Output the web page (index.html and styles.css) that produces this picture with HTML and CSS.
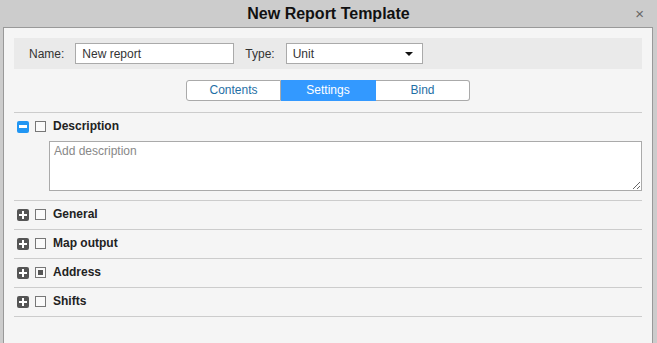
FILE: index.html
```html
<!DOCTYPE html>
<html lang="en">
  <head>
    <meta charset="UTF-8" />
    <meta name="viewport" content="width=device-width, initial-scale=1.0" />
    <title>New Report Template</title>
    <link rel="stylesheet" href="styles.css">
  </head>
  <body>
    <div class="dialog">
      <div class="header">
        <span class="title">New Report Template</span>
        <span class="close">&times;</span>
      </div>

      <div class="panel">
        <div class="props">
          <label class="prop-label">Name:</label>
          <input class="field name-field" type="text" value="New report" />
          <label class="prop-label">Type:</label>
          <div class="field select">
            <span>Unit</span>
            <span class="arrow"></span>
          </div>
        </div>

        <div class="tabs">
          <div class="tab">Contents</div>
          <div class="tab active">Settings</div>
          <div class="tab">Bind</div>
        </div>

        <div class="sections">
          <div class="section">
            <div class="section-head">
              <span class="toggle open"></span>
              <span class="check"></span>
              <span class="section-name">Description</span>
            </div>
            <textarea class="description" placeholder="Add description"></textarea>
          </div>

          <div class="section">
            <div class="section-head">
              <span class="toggle"></span>
              <span class="check"></span>
              <span class="section-name">General</span>
            </div>
          </div>

          <div class="section">
            <div class="section-head">
              <span class="toggle"></span>
              <span class="check"></span>
              <span class="section-name">Map output</span>
            </div>
          </div>

          <div class="section">
            <div class="section-head">
              <span class="toggle"></span>
              <span class="check partial"></span>
              <span class="section-name">Address</span>
            </div>
          </div>

          <div class="section">
            <div class="section-head">
              <span class="toggle"></span>
              <span class="check"></span>
              <span class="section-name">Shifts</span>
            </div>
          </div>
        </div>
      </div>
    </div>
  </body>
</html>
```

FILE: styles.css
```css
* {
  margin: 0;
  padding: 0;
  box-sizing: border-box;
}
body {
  background: #cccccc;
  font-family: "Liberation Sans", Arial, sans-serif;
  font-size: 12px;
  color: #222;
}
.dialog {
  height: 343px;
  display: flex;
  flex-direction: column;
}
.header {
  height: 27px;
  display: flex;
  align-items: center;
  justify-content: center;
  position: relative;
}
.title {
  font-size: 16px;
  font-weight: bold;
  color: #111;
}
.close {
  position: absolute;
  right: 13px;
  top: 5px;
  font-size: 15px;
  color: #666;
}
.panel {
  flex: 1;
  margin: 0 4px 0 3px;
  border: 1px solid #999;
  border-bottom: none;
  background: #f5f5f5;
  padding: 10px 10px 0 10px;
}

/* name / type row */
.props {
  display: flex;
  align-items: center;
  height: 31px;
  background: #eaeaea;
  padding-left: 15px;
}
.prop-label {
  color: #333;
  margin-right: 11px;
}
.field {
  height: 21px;
  border: 1px solid #aaa;
  background: #fff;
  font-family: inherit;
  font-size: 12px;
  color: #333;
  padding: 0 6px;
}
.name-field {
  width: 159px;
  margin-right: 11px;
  outline: none;
}
.select {
  width: 137px;
  display: flex;
  align-items: center;
  justify-content: space-between;
}
.arrow {
  width: 0;
  height: 0;
  border-left: 4px solid transparent;
  border-right: 4px solid transparent;
  border-top: 4px solid #111;
  margin-right: 3px;
}

/* tabs */
.tabs {
  display: flex;
  justify-content: center;
  margin-top: 11px;
}
.tab {
  width: 95px;
  height: 21px;
  line-height: 19px;
  text-align: center;
  color: #1f6fa5;
  background: #fff;
  border: 1px solid #aaa;
  border-left: none;
}
.tab:first-child {
  border-left: 1px solid #aaa;
  border-radius: 3px 0 0 3px;
}
.tab:last-child {
  width: 94px;
  border-radius: 0 3px 3px 0;
}
.tab.active {
  background: #3399ff;
  border-color: #3399ff;
  color: #fff;
}

/* sections */
.sections {
  margin-top: 11px;
  border-top: 1px solid #ccc;
}
.section {
  border-bottom: 1px solid #ccc;
}
.section-head {
  height: 28px;
  display: flex;
  align-items: center;
  padding-left: 3px;
}
.toggle {
  width: 12px;
  height: 12px;
  border-radius: 2px;
  background: #555;
  position: relative;
  margin-right: 6px;
  margin-top: -1px;
}
.toggle::before,
.toggle::after {
  content: "";
  position: absolute;
  background: #fff;
}
.toggle::before {
  left: 2px;
  top: 5px;
  width: 8px;
  height: 2px;
}
.toggle::after {
  left: 5px;
  top: 2px;
  width: 2px;
  height: 8px;
}
.toggle.open {
  background: #2196f3;
}
.toggle.open::before {
  top: 4px;
  height: 3px;
}
.toggle.open::after {
  display: none;
}
.check {
  width: 11px;
  height: 11px;
  border: 1px solid #777;
  background: #fafafa;
  margin-right: 7px;
  margin-top: -1px;
  position: relative;
}
.check.partial::after {
  content: "";
  position: absolute;
  left: 2px;
  top: 2px;
  width: 5px;
  height: 5px;
  background: #555;
}
.section-name {
  font-weight: bold;
  color: #222;
  margin-bottom: 2px;
}
.description {
  display: block;
  width: 593px;
  height: 50px;
  margin: 0 0 9px 35px;
  border: 1px solid #aaa;
  background: #fff;
  font-family: inherit;
  font-size: 12px;
  color: #333;
  padding: 2px 4px;
  outline: none;
}
.description::placeholder {
  color: #888;
}
```
